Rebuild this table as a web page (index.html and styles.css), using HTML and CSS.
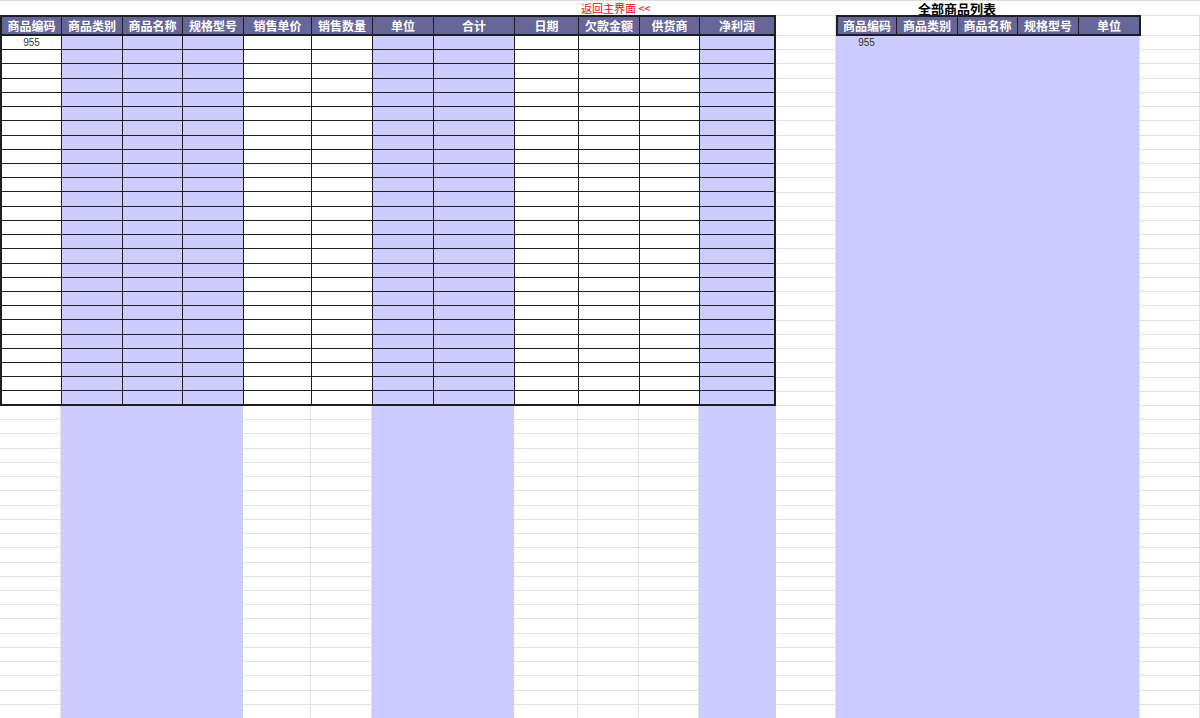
FILE: index.html
```html
<!DOCTYPE html>
<html lang="zh-CN">
<head>
<meta charset="utf-8">
<title>销售记录</title>
<link rel="stylesheet" href="styles.css">
</head>
<body>
<div class="sheet">
  <div class="bg">
    <div class="strip w"></div>
    <div class="strip p span3"></div>
    <div class="strip w"></div>
    <div class="strip w"></div>
    <div class="strip p span2"></div>
    <div class="strip w"></div>
    <div class="strip w"></div>
    <div class="strip w"></div>
    <div class="strip p"></div>
    <div class="strip w"></div>
    <div class="strip p span5"></div>
    <div class="strip w last"></div>
  </div>

  <div class="back">返回主界面 &lt;&lt;</div>
  <div class="title">全部商品列表</div>

  <table class="main">
    <colgroup>
      <col class="cw" style="width:62px"><col class="cp" style="width:61px"><col class="cp" style="width:60px"><col class="cp" style="width:61px"><col class="cw" style="width:68px"><col class="cw" style="width:61px"><col class="cp" style="width:61px"><col class="cp" style="width:81px"><col class="cw" style="width:64px"><col class="cw" style="width:61px"><col class="cw" style="width:60px"><col class="cp" style="width:76px">
    </colgroup>
    <thead>
      <tr><th>商品编码</th><th>商品类别</th><th>商品名称</th><th>规格型号</th><th>销售单价</th><th>销售数量</th><th>单位</th><th>合计</th><th>日期</th><th>欠款金额</th><th>供货商</th><th>净利润</th></tr>
    </thead>
    <tbody>
      <tr><td class="num">955</td><td></td><td></td><td></td><td></td><td></td><td></td><td></td><td></td><td></td><td></td><td></td></tr>
      <tr><td></td><td></td><td></td><td></td><td></td><td></td><td></td><td></td><td></td><td></td><td></td><td></td></tr>
      <tr><td></td><td></td><td></td><td></td><td></td><td></td><td></td><td></td><td></td><td></td><td></td><td></td></tr>
      <tr><td></td><td></td><td></td><td></td><td></td><td></td><td></td><td></td><td></td><td></td><td></td><td></td></tr>
      <tr><td></td><td></td><td></td><td></td><td></td><td></td><td></td><td></td><td></td><td></td><td></td><td></td></tr>
      <tr><td></td><td></td><td></td><td></td><td></td><td></td><td></td><td></td><td></td><td></td><td></td><td></td></tr>
      <tr><td></td><td></td><td></td><td></td><td></td><td></td><td></td><td></td><td></td><td></td><td></td><td></td></tr>
      <tr><td></td><td></td><td></td><td></td><td></td><td></td><td></td><td></td><td></td><td></td><td></td><td></td></tr>
      <tr><td></td><td></td><td></td><td></td><td></td><td></td><td></td><td></td><td></td><td></td><td></td><td></td></tr>
      <tr><td></td><td></td><td></td><td></td><td></td><td></td><td></td><td></td><td></td><td></td><td></td><td></td></tr>
      <tr><td></td><td></td><td></td><td></td><td></td><td></td><td></td><td></td><td></td><td></td><td></td><td></td></tr>
      <tr><td></td><td></td><td></td><td></td><td></td><td></td><td></td><td></td><td></td><td></td><td></td><td></td></tr>
      <tr><td></td><td></td><td></td><td></td><td></td><td></td><td></td><td></td><td></td><td></td><td></td><td></td></tr>
      <tr><td></td><td></td><td></td><td></td><td></td><td></td><td></td><td></td><td></td><td></td><td></td><td></td></tr>
      <tr><td></td><td></td><td></td><td></td><td></td><td></td><td></td><td></td><td></td><td></td><td></td><td></td></tr>
      <tr><td></td><td></td><td></td><td></td><td></td><td></td><td></td><td></td><td></td><td></td><td></td><td></td></tr>
      <tr><td></td><td></td><td></td><td></td><td></td><td></td><td></td><td></td><td></td><td></td><td></td><td></td></tr>
      <tr><td></td><td></td><td></td><td></td><td></td><td></td><td></td><td></td><td></td><td></td><td></td><td></td></tr>
      <tr><td></td><td></td><td></td><td></td><td></td><td></td><td></td><td></td><td></td><td></td><td></td><td></td></tr>
      <tr><td></td><td></td><td></td><td></td><td></td><td></td><td></td><td></td><td></td><td></td><td></td><td></td></tr>
      <tr><td></td><td></td><td></td><td></td><td></td><td></td><td></td><td></td><td></td><td></td><td></td><td></td></tr>
      <tr><td></td><td></td><td></td><td></td><td></td><td></td><td></td><td></td><td></td><td></td><td></td><td></td></tr>
      <tr><td></td><td></td><td></td><td></td><td></td><td></td><td></td><td></td><td></td><td></td><td></td><td></td></tr>
      <tr><td></td><td></td><td></td><td></td><td></td><td></td><td></td><td></td><td></td><td></td><td></td><td></td></tr>
      <tr><td></td><td></td><td></td><td></td><td></td><td></td><td></td><td></td><td></td><td></td><td></td><td></td></tr>
      <tr><td></td><td></td><td></td><td></td><td></td><td></td><td></td><td></td><td></td><td></td><td></td><td></td></tr>
    </tbody>
  </table>

  <table class="list">
    <colgroup>
      <col style="width:61px"><col style="width:61px"><col style="width:60px"><col style="width:61px"><col style="width:62px">
    </colgroup>
    <thead>
      <tr><th>商品编码</th><th>商品类别</th><th>商品名称</th><th>规格型号</th><th>单位</th></tr>
    </thead>
    <tbody>
      <tr><td class="num">955</td><td></td><td></td><td></td><td></td></tr>
    </tbody>
  </table>
</div>
</body>
</html>
```

FILE: styles.css
```css
:root {
  --cols: 61px 61px 60px 61px 68px 61px 61px 81px 64px 61px 60px 77px 60px 60px 61px 60px 61px 61px 61px;
  --grid: #e3e3e3;
  --fill: #ccccff;
  --head: #666699;
  --line: #1e1e1e;
}

* { box-sizing: border-box; }

html, body {
  margin: 0;
  padding: 0;
  background: #fff;
}

body {
  width: 1200px;
  height: 718px;
  overflow: hidden;
  font-family: "Noto Sans CJK SC", "Liberation Sans", sans-serif;
}

.sheet {
  display: grid;
  grid-template-columns: var(--cols);
  grid-template-rows: 15px 21px 370px 1fr;
  width: 1200px;
  height: 718px;
  background: linear-gradient(#dcdcdc, #dcdcdc) 0 0 / 100% 1px no-repeat #fff;
}

.bg {
  grid-column: 1 / -1;
  grid-row: 2 / -1;
  display: grid;
  grid-template-columns: var(--cols);
}

.strip.w {
  border-right: 1px solid var(--grid);
  background:
    linear-gradient(var(--grid), var(--grid)) 0 0 / 100% 1px no-repeat,
    repeating-linear-gradient(to bottom, var(--grid) 0 1px, transparent 1px 14.23px) 0 20px / 100% 100% no-repeat,
    #fff;
}

.strip.last { border-left: 1px solid var(--grid); }

.strip.p { background: var(--fill); }
.span2 { grid-column: span 2; }
.span3 { grid-column: span 3; }
.span5 { grid-column: span 5; }

.back {
  grid-column: 10 / 13;
  grid-row: 1;
  padding: 1px 0 0 3px;
  font-size: 11px;
  line-height: 15px;
  color: #ff0000;
  white-space: nowrap;
}

.title {
  grid-column: 14 / 18;
  grid-row: 1;
  padding-top: 1px;
  font-size: 13px;
  font-weight: 700;
  line-height: 15px;
  color: #000;
  text-align: center;
  white-space: nowrap;
}

table {
  border-collapse: separate;
  border-spacing: 0;
  table-layout: fixed;
  align-self: start;
}

.main {
  grid-column: 1 / 13;
  grid-row: 2 / 4;
  width: 776px;
}

.list {
  grid-column: 14 / 19;
  grid-row: 2 / 4;
  width: 305px;
}

col.cw { background: #fff; }
col.cp { background: var(--fill); }

thead tr { height: 21px; }
tbody tr { height: 14.23px; }

th {
  padding: 0;
  background: var(--head);
  color: #fff;
  font-size: 12px;
  font-weight: 700;
  line-height: 14px;
  text-align: center;
  white-space: nowrap;
  overflow: hidden;
  border-top: 2px solid var(--line);
  border-bottom: 2px solid var(--line);
  border-right: 1px solid var(--line);
}

th:first-child { border-left: 2px solid var(--line); }
th:last-child { border-right-width: 2px; }

.main td {
  padding: 0;
  border-right: 1px solid var(--line);
  border-bottom: 1px solid var(--line);
}

.main td:first-child { border-left: 2px solid var(--line); }
.main td:last-child { border-right-width: 2px; }
.main tbody tr:last-child td { border-bottom-width: 2px; }

.list td {
  padding: 0;
  border: none;
}

td.num {
  font-family: "Liberation Sans", Arial, sans-serif;
  font-size: 10px;
  line-height: 12px;
  color: #333;
  text-align: center;
  vertical-align: middle;
}
```
